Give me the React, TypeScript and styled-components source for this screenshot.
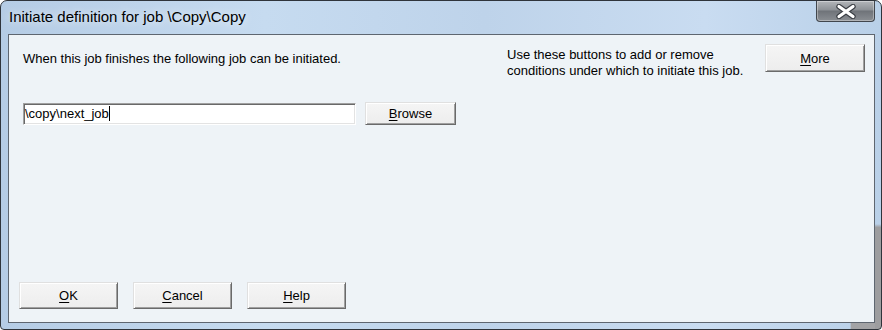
import React, { ReactElement } from 'react';
import styled, { createGlobalStyle } from 'styled-components';

const GlobalStyle = createGlobalStyle`
  html, body {
    margin: 0;
    padding: 0;
    background: #ffffff;
  }
  * {
    box-sizing: border-box;
  }
`;

const Frame = styled.div`
  width: 882px;
  height: 330px;
  display: flex;
  flex-direction: column;
  padding: 0 6px 6px 7px;
  border: 1px solid #2f343b;
  border-radius: 7px 7px 4px 4px;
  background:
    linear-gradient(to bottom, transparent 68%, #9d9d9f 69%) right 0 top 0 / 6px 100% no-repeat,
    linear-gradient(to right, transparent 96.5%, #a3a3a5 96.6%) left 0 bottom 0 / 100% 6px no-repeat,
    linear-gradient(to right, #b5cce5 0%, #c6dbf0 30%, #bed3ea 55%, #c9dcf1 80%, #b9d0e8 100%);
  font-family: 'Liberation Sans', Arial, sans-serif;
`;

const TitleBar = styled.div`
  height: 33px;
  display: flex;
  justify-content: space-between;
  align-items: flex-start;
`;

const Title = styled.div`
  padding: 7px 0 0 1px;
  font-size: 15px;
  color: #000;
  text-shadow: 0 0 8px rgba(255, 255, 255, 0.9);
`;

const CloseButton = styled.div`
  width: 59px;
  height: 21px;
  display: flex;
  align-items: center;
  justify-content: center;
  border: 1px solid #41464d;
  border-top: none;
  border-radius: 0 0 4px 4px;
  background: linear-gradient(to bottom, #b3b6ba 0%, #8d9196 45%, #6f7379 50%, #8a8e93 100%);
  box-shadow: inset 0 0 0 1px rgba(255, 255, 255, 0.35);
`;

const Client = styled.div`
  flex: 1;
  display: flex;
  flex-direction: column;
  border: 1px solid #5e6670;
  background: #eef3f7;
  font-size: 13px;
  color: #000;
`;

const TopRow = styled.div`
  display: flex;
  align-items: flex-start;
  margin-top: 9px;
  padding: 0 9px 0 14px;
`;

const Intro = styled.div`
  flex: 1;
  margin-top: 7px;
  line-height: 15px;
`;

const Hint = styled.div`
  width: 258px;
  margin-top: 3px;
  line-height: 16px;
`;

const Button = styled.button<{ $w: number; $h: number }>`
  width: ${(p) => p.$w}px;
  height: ${(p) => p.$h}px;
  padding: 0;
  flex-shrink: 0;
  font-family: 'Liberation Sans', Arial, sans-serif;
  font-size: 13px;
  color: #000;
  background: linear-gradient(to bottom, #f5f5f5, #ededed);
  border-style: solid;
  border-width: 1px;
  border-color: #e0e0e0 #6a6a6a #6a6a6a #e0e0e0;
  box-shadow: inset 1px 1px 0 #ffffff, inset -1px -1px 0 #a0a0a0;
  border-radius: 0;
  u {
    text-decoration-thickness: 1px;
    text-underline-offset: 2px;
  }
`;

const InputRow = styled.div`
  display: flex;
  align-items: center;
  gap: 9px;
  margin-top: 23px;
  padding-left: 14px;
`;

const Field = styled.div`
  width: 333px;
  height: 22px;
  display: flex;
  align-items: center;
  padding-left: 1px;
  background: #ffffff;
  border-style: solid;
  border-width: 1px;
  border-color: #a0a0a0 #ffffff #ffffff #a0a0a0;
  box-shadow: inset 1px 1px 0 #696969, inset -1px -1px 0 #e3e3e3;
`;

const Caret = styled.span`
  display: inline-block;
  width: 1px;
  height: 15px;
  background: #000;
`;

const Spacer = styled.div`
  flex: 1;
`;

const ButtonRow = styled.div`
  display: flex;
  gap: 15px;
  padding-left: 10px;
  margin-bottom: 13px;
`;

const CloseGlyph = (): ReactElement => (
  <svg width="22" height="15" viewBox="0 0 22 15">
    <path d="M4 2.5 L18 12.5 M18 2.5 L4 12.5" stroke="#3a3e44" strokeWidth="5.4" strokeLinecap="round" />
    <path d="M4 2.5 L18 12.5 M18 2.5 L4 12.5" stroke="#ffffff" strokeWidth="3.2" strokeLinecap="round" />
  </svg>
);

const App = (): ReactElement => (
  <>
    <GlobalStyle />
    <Frame>
      <TitleBar>
        <Title>Initiate definition for job \Copy\Copy</Title>
        <CloseButton>
          <CloseGlyph />
        </CloseButton>
      </TitleBar>
      <Client>
        <TopRow>
          <Intro>When this job finishes the following job can be initiated.</Intro>
          <Hint>
            Use these buttons to add or remove
            <br />
            conditions under which to initiate this job.
          </Hint>
          <Button $w={100} $h={28}>
            <u>M</u>ore
          </Button>
        </TopRow>
        <InputRow>
          <Field>
            \copy\next_job
            <Caret />
          </Field>
          <Button $w={91} $h={23}>
            <u>B</u>rowse
          </Button>
        </InputRow>
        <Spacer />
        <ButtonRow>
          <Button $w={99} $h={27}>
            <u>O</u>K
          </Button>
          <Button $w={99} $h={27}>
            <u>C</u>ancel
          </Button>
          <Button $w={99} $h={27}>
            <u>H</u>elp
          </Button>
        </ButtonRow>
      </Client>
    </Frame>
  </>
);

export default App;
